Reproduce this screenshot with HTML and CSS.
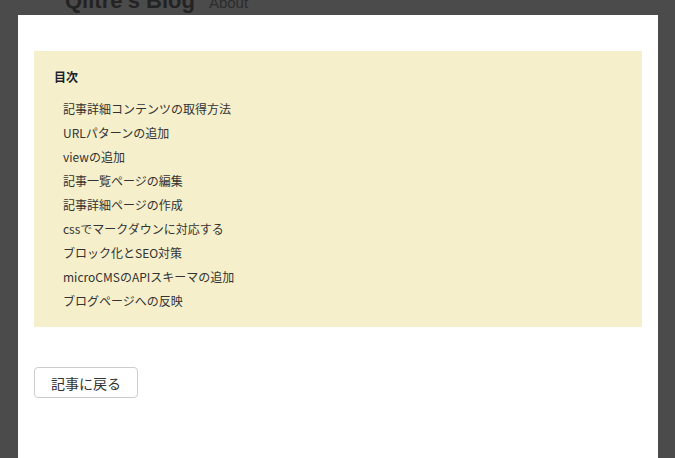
FILE: index.html
```html
<!DOCTYPE html>
<html lang="ja">
<head>
<meta charset="utf-8">
<title>Qiitre's Blog</title>
<link rel="stylesheet" href="styles.css">
</head>
<body>
<header class="site-header">
  <span class="site-title">Qiitre's Blog</span>
  <span class="site-nav">About</span>
</header>
<div class="overlay">
  <div class="modal">
    <nav class="toc">
      <p class="toc-title">目次</p>
      <ul class="toc-list">
        <li>記事詳細コンテンツの取得方法</li>
        <li>URLパターンの追加</li>
        <li>viewの追加</li>
        <li>記事一覧ページの編集</li>
        <li>記事詳細ページの作成</li>
        <li>cssでマークダウンに対応する</li>
        <li>ブロック化とSEO対策</li>
        <li>microCMSのAPIスキーマの追加</li>
        <li>ブログページへの反映</li>
      </ul>
    </nav>
    <button class="back-btn" type="button">記事に戻る</button>
  </div>
</div>
</body>
</html>
```

FILE: styles.css
```css
html, body {
  margin: 0;
  padding: 0;
  height: 100%;
}
body {
  background: #4b4b4b;
  font-family: "Noto Sans CJK JP", "Noto Sans", sans-serif;
  overflow: hidden;
}
.site-header {
  display: flex;
  align-items: flex-start;
  margin-top: -10px;
  padding-left: 65px;
  gap: 14px;
  font-family: "Liberation Sans", Arial, sans-serif;
}
.site-title {
  font-size: 22px;
  line-height: 22px;
  font-weight: bold;
  color: #232323;
}
.site-nav {
  font-size: 15px;
  line-height: 15px;
  margin-top: 5px;
  color: #2c2c2c;
}
.overlay {
  position: fixed;
  inset: 0;
  display: flex;
  padding: 15px 17px 0 18px;
}
.modal {
  flex: 1;
  background: #ffffff;
  padding: 36px 16px 0 16px;
  box-sizing: border-box;
  height: 480px;
}
.toc {
  background: #f5efcb;
  padding: 16px 20px 14px 20px;
}
.toc-title {
  margin: 0;
  font-size: 12px;
  line-height: 20px;
  font-weight: bold;
  color: #1b1f2e;
}
.toc-list {
  list-style: none;
  margin: 10px 0 0 0;
  padding: 0 0 0 9px;
}
.toc-list li {
  font-size: 12px;
  line-height: 24px;
  color: #333333;
}
.back-btn {
  margin-top: 40px;
  width: 104px;
  height: 31px;
  background: #ffffff;
  border: 1px solid #cccccc;
  border-radius: 4px;
  font-family: "Noto Sans CJK JP", "Noto Sans", sans-serif;
  font-size: 14px;
  color: #333333;
  padding: 0;
  display: block;
}
```
